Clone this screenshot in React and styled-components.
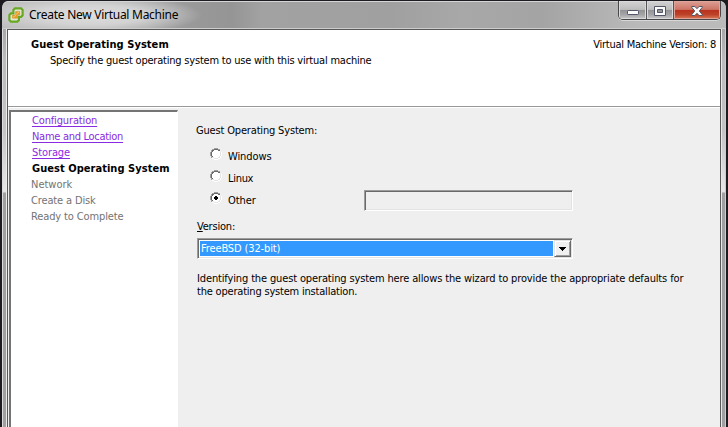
import React, { useState } from "react";
import styled, { createGlobalStyle, css } from "styled-components";

const Global = createGlobalStyle`
  *, *::before, *::after { box-sizing: border-box; }
  body { margin: 0; overflow: hidden; background: #1c1c20; }
`;

const Frame = styled.div`
  width: 728px;
  height: 427px;
  overflow: hidden;
  display: flex;
  flex-direction: column;
  font: 11px/16px "DejaVu Sans Condensed", "DejaVu Sans", sans-serif;
  font-stretch: condensed;
  color: #000;
  border: 2px solid #1e1c20;
  border-bottom: 0;
  border-top-width: 1px;
  border-radius: 8px 8px 0 0;
  background: linear-gradient(#aaa 0, #a8a8a8 28px, #bcbcbc 60px, #c4c4c4 130px, #e6e6e6 190px, #dedede 191px, #a0a0a0 192px, #a0a0a0 100%);
  box-shadow: inset 1px 1px 0 #dcdcdc, inset -1px 0 0 #ccc;
`;

const TitleBar = styled.header`
  height: 28px;
  flex: none;
  display: flex;
  align-items: flex-start;
  padding-left: 6px;
  border-radius: 6px 6px 0 0;
  background: radial-gradient(ellipse 112px 20px at 88px 14px, #dedede 0, rgba(214, 214, 214, 0.9) 50%, rgba(180, 180, 180, 0) 100%),
    linear-gradient(90deg, #bdbdbd 0, #b0b0b0 110px, #999 190px, #959595 230px, #a2a2a2 260px, #a0a0a0 390px, #a8a8a8 460px, #a4a4a4 540px, #bababa 640px, #bbb 100%);
  box-shadow: inset 0 1px 0 #d5d5d5, inset 0 -1px 0 #cdcdcd;
`;

const AppIcon = styled.svg`
  width: 16px;
  height: 16px;
  margin-top: 6px;
`;

const Title = styled.h1`
  margin: 5px 0 0 5px;
  flex: 1;
  font: 12px/18px "Noto Sans", sans-serif;
  letter-spacing: -0.27px;
`;

const WindowButtons = styled.div`
  display: flex;
  width: 103px;
  height: 19px;
  margin-right: 5px;
  border: 1px solid #47464a;
  border-top: 0;
  border-radius: 0 0 5px 5px;
  overflow: hidden;
  box-shadow: 0 1px 0 #d8d8d8;
`;

const WindowButton = styled.button`
  width: ${(p) => p.$w}px;
  padding: 1px 0 0;
  border: 0;
  border-right: ${(p) => (p.$close ? "0" : "1px solid #555459")};
  display: flex;
  align-items: center;
  justify-content: center;
  background: ${(p) =>
    p.$close
      ? "linear-gradient(#dba095 0, #cd7566 47%, #b8311c 50%, #bd4129 75%, #d97b58 100%)"
      : "linear-gradient(#d2d2d2 0, #bdbdbd 47%, #929295 50%, #a4a4a7 75%, #c6c6c8 100%)"};
  box-shadow: inset 0 0 0 1px ${(p) => (p.$close ? "#e0a598" : "#dadada")};
`;

const MinimizeArt = styled.svg`
  margin-top: 3px;
`;

const Client = styled.main`
  flex: 1;
  display: flex;
  flex-direction: column;
  margin: 0 5px 0 5px;
  border: 1px solid #58585a;
  border-bottom: 0;
  background: #efefef;
  box-shadow: -1px 0 0 #ececec, 1px 0 0 #e8e8e8;
`;

const Banner = styled.section`
  height: 78px;
  flex: none;
  display: flex;
  justify-content: space-between;
  padding: 7px 4px 0 23px;
  background: #fff;
  border-bottom: 1px solid #fff;
  box-shadow: inset 0 -1px 0 #999;
`;

const Text = styled.div`
  white-space: nowrap;
  height: 16px;
  letter-spacing: ${(p) => p.$track || 0}px;
  margin-left: ${(p) => p.$indent || 0}px;
  ${(p) => p.$bold && css`font-weight: bold;`}
`;

const Body = styled.div`
  flex: 1;
  display: flex;
  min-height: 0;
  padding: 2px 0 0 1px;
`;

const Steps = styled.nav`
  width: 169px;
  padding: 1px 0 0 20px;
  background: #fff;
  border: 2px solid #747474;
  border-right: 1px solid #fff;
  border-bottom: 0;
`;

const Step = styled(Text)`
  margin-left: ${(p) => (p.$state === "pending" ? 0 : 1)}px;
  color: ${(p) => (p.$state === "done" ? "#8a2be2" : p.$state === "current" ? "#000" : "#737373")};
  text-decoration: ${(p) => (p.$state === "done" ? "underline" : "none")};
  text-underline-offset: 2px;
  text-decoration-skip-ink: none;
  font-weight: ${(p) => (p.$state === "current" ? "bold" : "normal")};
`;

const Form = styled.section`
  flex: 1;
  padding: 13px 0 0 18px;
`;

const Options = styled.div`
  display: flex;
  justify-content: space-between;
  align-items: flex-end;
  width: 377px;
  margin-top: 7px;
`;

const RadioList = styled.div`
  padding-left: 14px;
`;

const RadioRow = styled.label`
  height: 22px;
  display: flex;
  align-items: center;
  gap: 6px;
`;

const RadioArt = styled.svg`
  width: 12px;
  height: 12px;
  margin-bottom: 6px;
`;

const sunken = css`
  border: 1px solid;
  border-color: #9c9c9c #fff #fff #9c9c9c;
  box-shadow: inset 1px 1px 0 #696969, inset -1px -1px 0 #e3e3e3;
`;

const OtherField = styled.div`
  width: 209px;
  height: 21px;
  margin-bottom: 1px;
  ${sunken}
`;

const VersionLabel = styled(Text)`
  margin-top: 7px;
`;

const Select = styled.div`
  display: flex;
  width: 376px;
  height: 21px;
  margin: 3px 0 0 1px;
  padding: 2px;
  background: #fff;
  ${sunken}
`;

const Selected = styled.div`
  flex: 1;
  height: 15px;
  padding-left: 1px;
  line-height: 16px;
  background: #3399ff;
  color: #fff;
  letter-spacing: -0.13px;
`;

const Drop = styled.button`
  width: 17px;
  height: 17px;
  margin: -1px -1px 0 1px;
  padding: 1px 0 0;
  border: 1px solid;
  border-color: #e3e3e3 #696969 #696969 #e3e3e3;
  background: #f0f0f0;
  box-shadow: inset 1px 1px 0 #fff, inset -1px -1px 0 #a0a0a0;
  display: flex;
  align-items: center;
  justify-content: center;
`;

const Note = styled.div`
  margin: 13px 0 0 1px;
  & > div { height: 13px; line-height: 13px; }
`;

const steps = [
  ["Configuration", "done", -0.15],
  ["Name and Location", "done", -0.29],
  ["Storage", "done", -0.1],
  ["Guest Operating System", "current", 0.04],
  ["Network", "pending", 0],
  ["Create a Disk", "pending", -0.14],
  ["Ready to Complete", "pending", -0.12],
];

const systems = [
  ["Windows", -0.1],
  ["Linux", -0.3],
  ["Other", -0.1],
];

function Radio({ on }) {
  return (
    <RadioArt viewBox="0 0 12 12" shapeRendering="crispEdges">
      <path d="M4 1h4v1h2v2h1v4h-1v2H8v1H4v-1H2V8H1V4h1V2h2z" fill="#fff" />
      <path d="M4 0h4v1H4zM2 1h2v1H2zM8 1h2v1H8zM1 2h1v2H1zM0 4h1v4H0zM1 8h1v2H1z" fill="#a0a0a0" />
      <path d="M4 1h4v1H4zM2 2h2v1H3v1H2zM8 2h2v1H8zM1 4h1v4H1zM2 8h1v1H2z" fill="#696969" />
      <path d="M10 4h1v4h-1zM9 8h1v1H9zM8 9h2v1H8zM4 10h4v1H4zM2 9h2v1H2z" fill="#e3e3e3" />
      <path d="M11 4h1v4h-1zM10 8h1v2h-1zM8 10h2v1H8zM4 11h4v1H4zM2 10h2v1H2z" fill="#fff" />
      {on && <path d="M5 4h2v1h1v2H7v1H5V7H4V5h1z" fill="#000" />}
    </RadioArt>
  );
}

export default function App() {
  const [choice, setChoice] = useState("Other");
  return (
    <>
      <Global />
      <Frame>
        <TitleBar>
          <AppIcon viewBox="0 0 16 16">
            <path d="M6.9 1.4h6.2l1.5 1.5v5.4l-1.5 1.5h-2.2v3.3l-1.5 1.5H2.9l-1.5-1.5V7.9l1.5-1.5h2.5V2.9z" fill="#e3ead8" stroke="#69a822" strokeWidth="2.2" />
            <path d="M7.6 4.4h4.2v3.4H9.6v3.4H4.4V8.1h3.2z" fill="#e79d25" stroke="#c6831c" strokeWidth=".4" />
            <path d="M8 7.4L11 5M5 10.4l3-2.2" stroke="#f6c96c" />
          </AppIcon>
          <Title>Create New Virtual Machine</Title>
          <WindowButtons>
            <WindowButton $w={28} aria-label="Minimize">
              <MinimizeArt width="12" height="5"><rect x=".5" y=".5" width="11" height="4" rx=".7" fill="#fafafa" stroke="#535666" /></MinimizeArt>
            </WindowButton>
            <WindowButton $w={27} aria-label="Maximize">
              <svg width="12" height="10"><path d="M.5.5h11v9H.5zM3.5 3.5v3h5v-3z" fill="#fafafa" fillRule="evenodd" stroke="#535666" /></svg>
            </WindowButton>
            <WindowButton $w={46} $close aria-label="Close">
              <svg width="12" height="10"><path d="M.7.5h3.2L6 2.7 8.1.5h3.2v.8L8.3 5l3 3.7v.8H8.1L6 7.3 3.9 9.5H.7v-.8l3-3.7-3-3.7z" fill="#fafafa" stroke="#535666" /></svg>
            </WindowButton>
          </WindowButtons>
        </TitleBar>
        <Client>
          <Banner>
            <div>
              <Text $bold $track={0.05}>Guest Operating System</Text>
              <Text $indent={19} $track={-0.21}>Specify the guest operating system to use with this virtual machine</Text>
            </div>
            <Text $track={-0.24}>Virtual Machine Version: 8</Text>
          </Banner>
          <Body>
            <Steps>
              {steps.map(([name, state, track]) => (
                <Step key={name} $state={state} $track={track}>{name}</Step>
              ))}
            </Steps>
            <Form>
              <Text $track={-0.17}>Guest Operating System:</Text>
              <Options>
                <RadioList>
                  {systems.map(([name, track]) => (
                    <RadioRow key={name} onClick={() => setChoice(name)}>
                      <Radio on={choice === name} />
                      <Text $track={track}>{name}</Text>
                    </RadioRow>
                  ))}
                </RadioList>
                <OtherField />
              </Options>
              <VersionLabel $indent={1} $track={-0.2}><u>V</u>ersion:</VersionLabel>
              <Select>
                <Selected>FreeBSD (32-bit)</Selected>
                <Drop aria-label="Open version list">
                  <svg width="7" height="4" shapeRendering="crispEdges"><path d="M0 0h7v1H6v1H5v1H4v1H3V3H2V2H1V1H0z" /></svg>
                </Drop>
              </Select>
              <Note>
                <Text $track={-0.138}>Identifying the guest operating system here allows the wizard to provide the appropriate defaults for</Text>
                <Text $track={-0.2}>the operating system installation.</Text>
              </Note>
            </Form>
          </Body>
        </Client>
      </Frame>
    </>
  );
}
